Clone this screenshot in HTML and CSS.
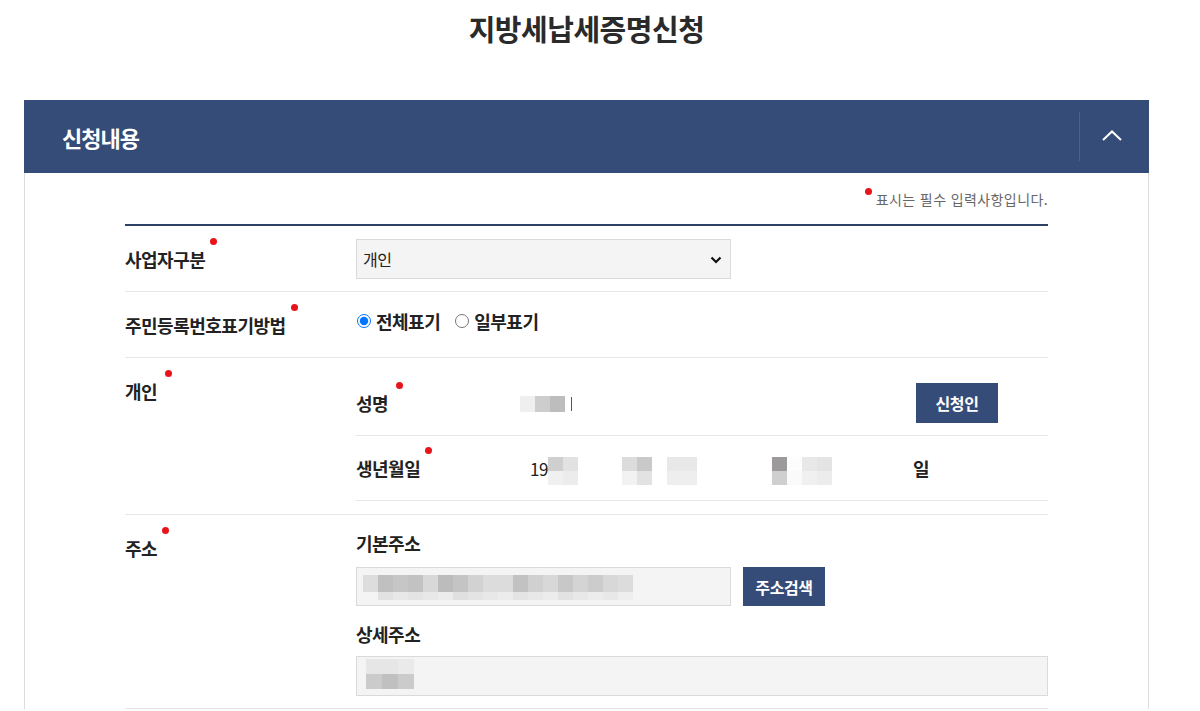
FILE: index.html
```html
<!DOCTYPE html>
<html lang="ko">
<head>
<meta charset="utf-8">
<title>지방세납세증명신청</title>
<link rel="stylesheet" href="styles.css">
</head>
<body>
<div class="page">
<h1 class="page-title">지방세납세증명신청</h1>
<section class="panel">
  <header class="panel-head">
    <h2 class="panel-title">신청내용</h2>
    <div class="panel-toggle">
      <svg width="20" height="11" viewBox="0 0 20 11"><polyline points="1,10 10,1.5 19,10" fill="none" stroke="#fff" stroke-width="2"/></svg>
    </div>
  </header>
  <div class="panel-body">
    <p class="req-note"><span class="note-dot"></span>표시는 필수 입력사항입니다.</p>
    <div class="form">
      <div class="row">
        <div class="label"><span class="req">사업자구분</span></div>
        <div class="value">
          <div class="select">
            <span>개인</span>
            <svg class="select-arrow" width="12" height="8" viewBox="0 0 12 8"><polyline points="1.5,1.5 6,6 10.5,1.5" fill="none" stroke="#111" stroke-width="2.2"/></svg>
          </div>
        </div>
      </div>
      <div class="row">
        <div class="label"><span class="req">주민등록번호표기방법</span></div>
        <div class="value radios">
          <label class="radio"><input type="radio" name="disp" checked> 전체표기</label>
          <label class="radio"><input type="radio" name="disp"> 일부표기</label>
        </div>
      </div>
      <div class="row row-sub">
        <div class="label"><span class="req req-wide">개인</span></div>
        <div class="value">
          <div class="sub">
            <div class="sub-label"><span class="req req-wide">성명</span></div>
            <div class="sub-value">
              <div class="mosaic name-mosaic">
                <i class="c-ef"></i><i class="c-cd"></i><i class="c-bd"></i><b class="stroke"></b>
              </div>
            </div>
            <button class="btn btn-apply">신청인</button>
          </div>
          <div class="sub">
            <div class="sub-label"><span class="req">생년월일</span></div>
            <div class="sub-value birth">
              <span class="num">19</span>
              <div class="blk m1"><i class="c-cf"></i><i class="c-e2"></i><i class="c-f0"></i><i class="c-ec"></i></div>
              <div class="blk m2"><i class="c-dc"></i><i class="c-c9"></i><i class="c-f2"></i><i class="c-e2"></i></div>
              <div class="blk m3"><i class="c-e8"></i><i class="c-e8"></i><i class="c-ee"></i><i class="c-ee"></i></div>
              <div class="blk m4"><i class="c-9c"></i><i class="c-fff"></i><i class="c-e8"></i><i class="c-e4"></i><i class="c-cf"></i><i class="c-fa"></i><i class="c-f0"></i><i class="c-ec"></i></div>
              <span class="day">일</span>
            </div>
          </div>
        </div>
      </div>
      <div class="row row-addr">
        <div class="label"><span class="req">주소</span></div>
        <div class="value">
          <div class="field-label">기본주소</div>
          <div class="addr-line">
            <div class="input input-base">
              <div class="addr-mosaic">
                <div class="arow top"><i class="c-dd"></i><i class="c-c0"></i><i class="c-c6"></i><i class="c-c2"></i><i class="c-d8"></i><i class="c-bc"></i><i class="c-c4"></i><i class="c-d2"></i><i class="c-dc"></i><i class="c-dc"></i><i class="c-c2"></i><i class="c-d0"></i><i class="c-d8"></i><i class="c-c8"></i><i class="c-d4"></i><i class="c-cc"></i><i class="c-d8"></i><i class="c-dc"></i></div>
                <div class="arow bottom"><i class="c-e2"></i><i class="c-e8"></i><i class="c-e4"></i><i class="c-e8"></i><i class="c-ec"></i><i class="c-e0"></i><i class="c-e4"></i><i class="c-e8"></i><i class="c-ec"></i><i class="c-e4"></i><i class="c-e8"></i><i class="c-ec"></i><i class="c-e2"></i><i class="c-e8"></i><i class="c-ec"></i><i class="c-e8"></i><i class="c-ee"></i></div>
              </div>
            </div>
            <button class="btn btn-search">주소검색</button>
          </div>
          <div class="field-label second">상세주소</div>
          <div class="input input-detail">
            <div class="detail-mosaic">
              <i class="c-e6"></i><i class="c-e6"></i><i class="c-ea"></i>
              <i class="c-cb"></i><i class="c-c0"></i><i class="c-cb"></i>
            </div>
          </div>
        </div>
      </div>
    </div>
  </div>
</section>
</div>
</body>
</html>
```

FILE: styles.css
```css
* { box-sizing: border-box; }
body {
  margin: 0;
  background: #fff;
  font-family: "Noto Sans CJK KR", "Noto Sans", sans-serif;
  color: #222;
}
.page {
  margin-left: 24px;
  width: 1125px;
}
.page-title {
  margin: 0 0 44px;
  text-align: center;
  font-size: 29px;
  line-height: 56px;
  font-weight: 700;
  letter-spacing: -0.5px;
  color: #2a2a2a;
}
.panel-head {
  height: 73px;
  background: #344c77;
  display: flex;
  align-items: center;
  justify-content: space-between;
  padding-left: 38px;
}
.panel-title {
  margin: 0;
  font-size: 22px;
  font-weight: 700;
  letter-spacing: -1px;
  color: #fff;
}
.panel-toggle {
  width: 70px;
  height: 49px;
  border-left: 1px solid #4b618a;
  display: flex;
  align-items: center;
  justify-content: center;
  padding-right: 6px;
  padding-bottom: 3px;
}
.panel-body {
  border-left: 1px solid #dcdcdc;
  border-right: 1px solid #dcdcdc;
  padding: 15px 100px 0 100px;
}
.req-note {
  margin: 0 0 15px;
  text-align: right;
  font-size: 14px;
  line-height: 20px;
  letter-spacing: 0.4px;
  color: #666;
}
.note-dot {
  display: inline-block;
  width: 7px;
  height: 7px;
  border-radius: 50%;
  background: #e8141b;
  vertical-align: 10px;
  margin-right: 4px;
}
.form { border-top: 2px solid #2c4164; }
.row {
  display: grid;
  grid-template-columns: 231px 1fr;
  padding: 13px 0 12px;
  border-bottom: 1px solid #e6e6e6;
}
.row-sub { padding-bottom: 13px; }
.label, .sub-label {
  font-size: 18px;
  font-weight: 700;
  line-height: 40px;
  letter-spacing: -0.5px;
  color: #222;
}
.req {
  position: relative;
  display: inline-block;
}
.req::after {
  content: "";
  position: absolute;
  left: calc(100% + 5px);
  top: -1px;
  width: 7px;
  height: 7px;
  border-radius: 50%;
  background: #e8141b;
}
.req-wide::after { left: calc(100% + 8px); }
.select {
  position: relative;
  width: 375px;
  height: 40px;
  background: #f4f4f4;
  border: 1px solid #dadada;
  display: flex;
  align-items: center;
  padding-left: 6px;
  font-size: 16px;
  letter-spacing: -0.5px;
  color: #222;
}
.select-arrow { position: absolute; right: 8px; top: 16px; }
.radios {
  display: flex;
  align-items: center;
  gap: 14px;
  padding-bottom: 9px;
}
.radio {
  display: flex;
  align-items: center;
  font-size: 18px;
  font-weight: 700;
  letter-spacing: -0.5px;
  color: #222;
}
.radio input {
  margin: 0 5px 0 1px;
  width: 14px;
  height: 14px;
}
.sub {
  display: grid;
  grid-template-columns: 174px 1fr auto;
  align-items: center;
  padding: 12px 0;
  border-bottom: 1px solid #e6e6e6;
}
.sub-value { display: flex; align-items: center; height: 40px; }
.mosaic { display: flex; align-items: center; }
.mosaic i { display: block; width: 15px; height: 16px; }
.name-mosaic { margin-left: -10px; margin-top: 1px; }
.stroke { display: block; width: 1px; height: 14px; background: #555; margin-left: 6px; }
.btn {
  width: 82px;
  height: 40px;
  border: 0;
  background: #344c77;
  color: #fff;
  font-family: inherit;
  font-size: 16px;
  font-weight: 700;
  letter-spacing: -0.4px;
  padding: 0;
}
.btn-apply { margin-right: 50px; }
.birth { font-size: 17px; color: #222; }
.num { width: 18px; letter-spacing: -0.5px; }
.blk {
  display: grid;
  grid-template-columns: repeat(2, 15px);
  grid-auto-rows: 14px;
  margin-top: 6px;
}
.blk i { display: block; }
.m2 { margin-left: 44px; }
.m3 { margin-left: 15px; }
.m4 { margin-left: 75px; grid-template-columns: repeat(4, 15px); }
.day { margin-left: 81px; font-weight: 700; font-size: 18px; }
.field-label {
  font-size: 18px;
  font-weight: 700;
  line-height: 30px;
  letter-spacing: -0.5px;
  color: #222;
}
.field-label.second { margin-top: 13px; }
.addr-line {
  display: flex;
  gap: 12px;
  margin-top: 9px;
}
.addr-line .btn { height: 39px; }
.input {
  height: 40px;
  background: #f4f4f4;
  border: 1px solid #dadada;
}
.input-base { width: 375px; height: 39px; padding: 7px 0 0 6px; }
.input-detail { margin-top: 7px; width: 100%; padding: 2px 0 0 9px; }
.arow { display: flex; }
.arow i { display: block; width: 15px; }
.arow.top i { height: 17px; }
.arow.bottom { margin-left: 15px; }
.arow.bottom i { height: 8px; }
.detail-mosaic {
  display: grid;
  grid-template-columns: repeat(3, 16px);
  grid-auto-rows: 15px;
}
.detail-mosaic i { display: block; }
.c-ef { background: #efefef; } .c-cd { background: #cdcdcd; } .c-bd { background: #bdbdbd; }
.c-cf { background: #cfcfcf; } .c-e2 { background: #e2e2e2; } .c-f0 { background: #f0f0f0; }
.c-ec { background: #ececec; } .c-dc { background: #dcdcdc; } .c-c9 { background: #c9c9c9; }
.c-f2 { background: #f2f2f2; } .c-e8 { background: #e8e8e8; } .c-ee { background: #eeeeee; }
.c-9c { background: #9c9a9a; } .c-fff { background: #fdfdfd; } .c-e4 { background: #e4e4e4; }
.c-fa { background: #fafafa; } .c-dd { background: #dddddd; } .c-c0 { background: #c0c0c0; }
.c-c6 { background: #c6c6c6; } .c-c2 { background: #c2c2c2; } .c-d8 { background: #d8d8d8; }
.c-bc { background: #bcbcbc; } .c-c4 { background: #c4c4c4; } .c-d2 { background: #d2d2d2; }
.c-d0 { background: #d0d0d0; } .c-c8 { background: #c8c8c8; } .c-d4 { background: #d4d4d4; }
.c-cc { background: #cccccc; } .c-e0 { background: #e0e0e0; } .c-e6 { background: #e6e6e6; }
.c-ea { background: #eaeaea; } .c-cb { background: #cbcbcb; }
```
